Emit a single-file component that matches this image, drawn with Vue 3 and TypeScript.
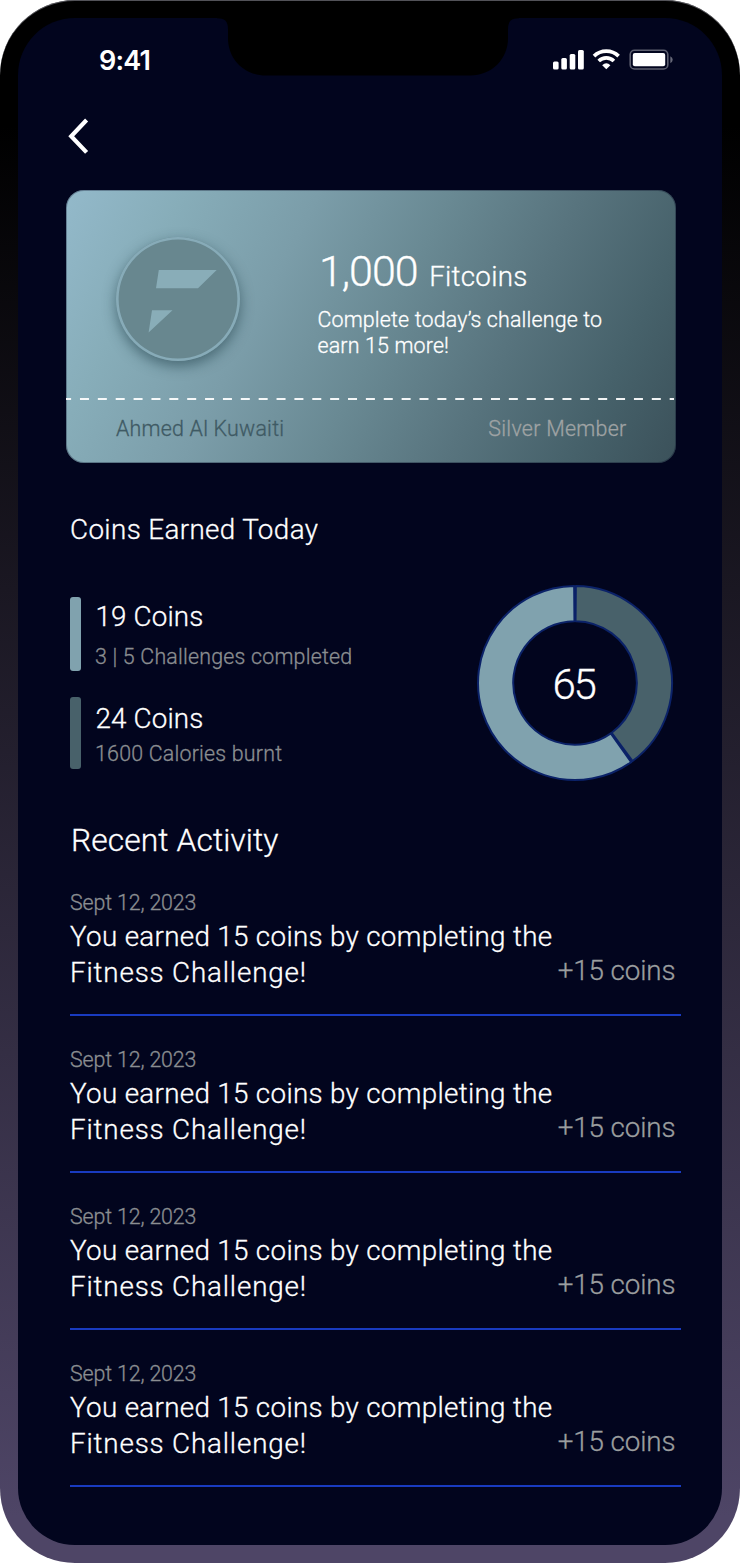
<script setup lang="ts">
interface Stat {
  coins: string
  detail: string
  tone: 'light' | 'dark'
}

interface Activity {
  id: number
  date: string
  lines: string[]
  reward: string
}

const stats: Stat[] = [
  { coins: '19 Coins', detail: '3 | 5 Challenges completed', tone: 'light' },
  { coins: '24 Coins', detail: '1600 Calories burnt', tone: 'dark' },
]

const activities: Activity[] = Array.from({ length: 4 }, (_, i) => ({
  id: i,
  date: 'Sept 12, 2023',
  lines: ['You earned 15 coins by completing the', 'Fitness Challenge!'],
  reward: '+15 coins',
}))

const center = 99
const outer = 97
const inner = 61.8

function sector(from: number, to: number): string {
  const point = (radius: number, deg: number): string => {
    const rad = (deg * Math.PI) / 180
    return `${(center + radius * Math.sin(rad)).toFixed(2)} ${(center - radius * Math.cos(rad)).toFixed(2)}`
  }
  const large = to - from > 180 ? 1 : 0
  return [
    `M${point(outer, from)}`,
    `A${outer} ${outer} 0 ${large} 1 ${point(outer, to)}`,
    `L${point(inner, to)}`,
    `A${inner} ${inner} 0 ${large} 0 ${point(inner, from)}Z`,
  ].join('')
}

const darkSlice = sector(0.5, 143.6)
const lightSlice = sector(144.6, 359.5)
</script>

<template>
  <div class="phone">
    <svg class="notch" width="302" height="60" viewBox="0 0 302 60" aria-hidden="true">
      <path d="M0 0V.3C7.500 .3 11 3 11 11V20C11 41 27 57.500 49 57.500H253C275 57.500 291 41 291 20V11C291 3 294.500 .3 302 .3V0Z" fill="#000" />
    </svg>
    <main class="screen">
      <header class="status">
        <span class="clock">9:41</span>
        <svg class="indicators" width="122" height="24" viewBox="0 0 122 24" aria-hidden="true">
          <g fill="#fff">
            <rect x="1" y="13.600" width="5.600" height="7.800" rx="1.500" />
            <rect x="9.300" y="10" width="5.600" height="11.400" rx="1.500" />
            <rect x="17.700" y="6" width="5.600" height="15.400" rx="1.500" />
            <rect x="26" y="2" width="5.800" height="19.400" rx="1.500" />
            <path d="M54.300 21.300 50.200 17.200Q54.300 13.400 58.400 17.200Z" />
          </g>
          <g fill="none" stroke="#fff" stroke-width="3.700">
            <path d="M42 8.100A17.600 17.600 0 0 1 66.600 8.100" />
            <path d="M46.700 13A11 11 0 0 1 61.900 13" />
          </g>
          <rect x="78.200" y="2.200" width="37.600" height="18.800" rx="4.300" fill="none" stroke="#fff" stroke-opacity=".36" stroke-width="1.600" />
          <rect x="80.800" y="4.900" width="32.400" height="13.300" rx="2" fill="#fff" />
          <path d="M118.300 8.200Q120.700 9.500 120.700 11.700 120.700 13.900 118.300 15.200Z" fill="#fff" fill-opacity=".4" />
        </svg>
      </header>

      <button class="back" type="button" aria-label="Back">
        <svg width="26" height="40" viewBox="0 0 26 40">
          <path d="M20.600 4 5.200 20.200 20.600 36.400" fill="none" stroke="#fff" stroke-width="4.200" />
        </svg>
      </button>

      <section class="card">
        <div class="card-top">
          <div class="coin">
            <svg width="124" height="124" viewBox="0 0 124 124" aria-hidden="true">
              <path d="M42.800 33H100.700L82 51.200H40Z M36 73.200H56.500L32.600 95.400Z" fill="#89adb8" />
            </svg>
          </div>
          <div class="card-copy">
            <p class="balance"><span class="amount">1,000</span><span class="unit">Fitcoins</span></p>
            <p class="hint">Complete today’s challenge to<br />earn 15 more!</p>
          </div>
        </div>
        <svg class="perforation" width="609" height="2" viewBox="0 0 609 2" aria-hidden="true">
          <path d="M0 1H608" stroke="#fff" stroke-opacity=".93" stroke-width="2" stroke-dasharray="9 8.87" stroke-dashoffset="3.900" />
        </svg>
        <div class="card-foot">
          <span class="owner">Ahmed Al Kuwaiti</span>
          <span class="tier">Silver Member</span>
        </div>
      </section>

      <h2 class="today">Coins Earned Today</h2>
      <section class="summary">
        <div class="stats">
          <div v-for="stat in stats" :key="stat.coins" class="stat" :class="stat.tone">
            <i class="bar"></i>
            <div class="stat-copy">
              <p class="stat-coins">{{ stat.coins }}</p>
              <p class="stat-detail">{{ stat.detail }}</p>
            </div>
          </div>
        </div>
        <div class="donut">
          <svg width="198" height="198" viewBox="0 0 198 198" aria-hidden="true">
            <g stroke="#0b2268" stroke-width="2" stroke-linejoin="round">
              <path :d="darkSlice" fill="#48616a" />
              <path :d="lightSlice" fill="#80a2ae" />
            </g>
          </svg>
          <span class="total">65</span>
        </div>
      </section>

      <h2 class="recent">Recent Activity</h2>
      <ul class="activities">
        <li v-for="item in activities" :key="item.id" class="activity">
          <p class="date">{{ item.date }}</p>
          <div class="entry">
            <p class="message"><span v-for="line in item.lines" :key="line">{{ line }}</span></p>
            <span class="reward">{{ item.reward }}</span>
          </div>
        </li>
      </ul>
    </main>
  </div>
</template>

<style>
body {
  background: #fff;
}
</style>

<style scoped>
.phone {
  position: relative;
  box-sizing: border-box;
  width: 740px;
  height: 1563px;
  padding: 18px;
  border-radius: 75px;
  background: linear-gradient(#000 0%, #000 8%, #4e4566 97%);
  box-shadow: inset 0 1px 0 rgba(150, 150, 160, 0.55);
  font-family: Roboto, "Liberation Sans", sans-serif;
  font-weight: 300;
  color: #fff;
}
.notch {
  position: absolute;
  left: 217px;
  top: 18px;
}
.screen {
  box-sizing: border-box;
  height: 1527px;
  border-radius: 57px;
  background: #02051e;
  padding: 12px 48px 0;
  -webkit-text-stroke: 0.3px currentColor;
}
p,
h2,
ul {
  margin: 0;
  padding: 0;
  font-weight: 300;
}
.status {
  display: flex;
  justify-content: space-between;
  align-items: center;
  height: 60px;
  padding: 0 0 0 33px;
}
.clock {
  padding-top: 2px;
  font: 600 27px/32px Inter, sans-serif;
  letter-spacing: -0.8px;
  -webkit-text-stroke: 0;
}
.back {
  display: block;
  margin: 26px 0 0;
  padding: 0;
  border: 0;
  background: none;
  height: 40px;
}
.card {
  box-sizing: border-box;
  width: 610px;
  height: 273px;
  margin-top: 34px;
  border-radius: 18px;
  background: linear-gradient(117deg, #93b9ca 0%, #87adb9 16%, #7b9da9 34%, #698993 52%, #58747e 69%, #46616a 86%, #3b515a 100%);
  box-shadow: inset 0 0 0 1px rgba(3, 6, 32, 0.3);
}
.card-top {
  display: flex;
  height: 208px;
}
.coin {
  box-sizing: border-box;
  flex: none;
  width: 124px;
  height: 124px;
  margin: 47px 0 0 50px;
  border-radius: 50%;
  background: #68878f;
  box-shadow: inset 0 0 0 2.600px #87abb8, 0 5px 13px rgba(20, 50, 60, 0.5);
}
.coin svg {
  display: block;
}
.card-copy {
  padding: 56px 0 0 77.500px;
}
.balance {
  display: flex;
  align-items: baseline;
  height: 50px;
  padding-left: 1.500px;
  line-height: 50px;
}
.amount {
  font-size: 43px;
  letter-spacing: -1px;
}
.unit {
  margin-left: 11.500px;
  font-size: 27.800px;
  letter-spacing: 0.26px;
}
.hint {
  margin-top: 11px;
  font-size: 21.400px;
  line-height: 26px;
  letter-spacing: 0.16px;
  white-space: nowrap;
}
.perforation {
  display: block;
}
.card-foot {
  display: flex;
  justify-content: space-between;
  padding: 16px 49.500px 0 50px;
  font-size: 21.400px;
  line-height: 26px;
}
.owner {
  color: #3f5a64;
  letter-spacing: 0.22px;
}
.tier {
  color: #9fa3a4;
  letter-spacing: 0.28px;
}
.today {
  margin: 49px 0 0 4px;
  font-size: 27.800px;
  line-height: 36px;
  letter-spacing: 0.37px;
}
.summary {
  display: flex;
  justify-content: space-between;
  margin-top: 36px;
  padding: 0 0 0 4px;
  height: 197px;
}
.stats {
  padding-top: 13px;
}
.stat {
  display: flex;
  gap: 14px;
}
.stat.light {
  height: 73.500px;
  margin-bottom: 26.500px;
}
.stat.dark {
  height: 72px;
}
.bar {
  width: 11px;
  border-radius: 3px;
}
.light .bar {
  background: #80a2ae;
}
.dark .bar {
  background: #48616a;
}
.stat-coins {
  margin: 2px 0 0 0.500px;
  font-size: 27.800px;
  line-height: 36px;
  letter-spacing: 0.13px;
}
.stat-detail {
  margin-top: 9px;
  font-size: 21.400px;
  line-height: 26px;
  letter-spacing: 0.2px;
  color: #8b8e91;
}
.dark .stat-coins {
  margin-top: 4px;
}
.dark .stat-detail {
  margin-top: 4px;
}
.donut {
  display: grid;
  width: 198px;
  height: 197px;
  place-items: center;
}
.donut > * {
  grid-area: 1 / 1;
}
.total {
  padding: 4px 3px 0 0;
  font-size: 42px;
  line-height: 50px;
  letter-spacing: -2.300px;
}
.recent {
  margin: 39px 0 0 5px;
  font-size: 31.800px;
  line-height: 40px;
  letter-spacing: 0.08px;
}
.activities {
  list-style: none;
  margin-top: -1px;
}
.activity {
  box-sizing: border-box;
  width: 611px;
  height: 157px;
  margin-left: 4px;
  padding-top: 31px;
  border-bottom: 2px solid #193bc0;
}
.date {
  font-size: 21.400px;
  line-height: 26px;
  letter-spacing: -0.15px;
  color: #8b8e91;
}
.entry {
  display: flex;
  justify-content: space-between;
  align-items: flex-end;
  margin-top: 3px;
  padding-right: 5.500px;
  font-size: 27.800px;
  line-height: 36px;
  letter-spacing: 0.31px;
}
.message span {
  display: block;
  white-space: nowrap;
}
.message span:last-child {
  letter-spacing: 0.83px;
}
.reward {
  margin-bottom: 2px;
  white-space: nowrap;
  letter-spacing: -0.12px;
  color: #9b9e9f;
}
</style>
